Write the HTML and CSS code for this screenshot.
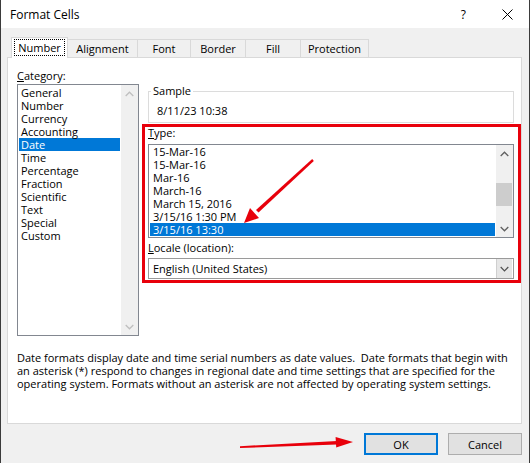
FILE: index.html
```html
<!DOCTYPE html>
<html lang="en">
<head>
<meta charset="utf-8">
<title>Format Cells</title>
<link rel="stylesheet" href="styles.css">
</head>
<body>
<div class="window">
  <div class="titlebar">
    <span class="title">Format Cells</span>
    <span class="help">?</span>
    <span class="close"><svg width="11" height="11" viewBox="0 0 11 11"><path d="M0.5 0.5 L10.5 10.5 M10.5 0.5 L0.5 10.5" stroke="#000" stroke-width="1" fill="none"/></svg></span>
  </div>

  <div class="tabs">
    <div class="tab tab-number active"><span class="focus">Number</span></div>
    <div class="tab tab-alignment">Alignment</div>
    <div class="tab tab-font">Font</div>
    <div class="tab tab-border">Border</div>
    <div class="tab tab-fill">Fill</div>
    <div class="tab tab-protection">Protection</div>
  </div>

  <div class="panel">
    <div class="content">
      <div class="cat-col">
        <div class="label"><u>C</u>ategory:</div>
        <div class="listbox cat-list">
          <div class="items">
            <div class="item">General</div>
            <div class="item">Number</div>
            <div class="item">Currency</div>
            <div class="item">Accounting</div>
            <div class="item selected">Date</div>
            <div class="item">Time</div>
            <div class="item">Percentage</div>
            <div class="item">Fraction</div>
            <div class="item">Scientific</div>
            <div class="item">Text</div>
            <div class="item">Special</div>
            <div class="item">Custom</div>
          </div>
          <div class="vscroll disabled">
            <div class="sb-btn"><svg width="9" height="6" viewBox="0 0 9 6"><polyline points="0.7,5 4.5,1.2 8.3,5" fill="none" stroke-width="1.3"/></svg></div>
            <div class="sb-track"></div>
            <div class="sb-btn"><svg width="9" height="6" viewBox="0 0 9 6"><polyline points="0.7,1 4.5,4.8 8.3,1" fill="none" stroke-width="1.3"/></svg></div>
          </div>
        </div>
      </div>

      <div class="right-col">
        <div class="group">
          <span class="group-label">Sample</span>
          <div class="sample-value">8/11/23 10:38</div>
        </div>

        <div class="label type-label"><u>T</u>ype:</div>
        <div class="listbox type-list">
          <div class="items">
            <div class="item">15-Mar-16</div>
            <div class="item">15-Mar-16</div>
            <div class="item">Mar-16</div>
            <div class="item">March-16</div>
            <div class="item">March 15, 2016</div>
            <div class="item">3/15/16 1:30 PM</div>
            <div class="item selected">3/15/16 13:30</div>
          </div>
          <div class="vscroll">
            <div class="sb-btn"><svg width="9" height="6" viewBox="0 0 9 6"><polyline points="0.7,5 4.5,1.2 8.3,5" fill="none" stroke-width="1.3"/></svg></div>
            <div class="sb-track"><div class="sb-thumb"></div></div>
            <div class="sb-btn"><svg width="9" height="6" viewBox="0 0 9 6"><polyline points="0.7,1 4.5,4.8 8.3,1" fill="none" stroke-width="1.3"/></svg></div>
          </div>
        </div>

        <div class="label locale-label"><u>L</u>ocale (location):</div>
        <div class="combo">
          <span class="combo-text">English (United States)</span>
          <span class="combo-btn"><svg width="9" height="6" viewBox="0 0 9 6"><polyline points="0.7,1 4.5,4.8 8.3,1" fill="none" stroke="#505050" stroke-width="1.2"/></svg></span>
        </div>
      </div>
    </div>

    <p class="desc">Date formats display date and time serial numbers as date values.&nbsp; Date formats that begin with<br>an asterisk (*) respond to changes in regional date and time settings that are specified for the<br>operating system. Formats without an asterisk are not affected by operating system settings.</p>
  </div>

  <div class="buttons">
    <button class="btn btn-default">OK</button>
    <button class="btn">Cancel</button>
  </div>

  <svg class="annotations" width="530" height="463" viewBox="0 0 530 463">
    <rect x="143.5" y="125.5" width="376" height="156" fill="none" stroke="#e8000b" stroke-width="3"/>
    <polygon points="313.8,160.9 312.2,159.1 256,210 258.5,212.6" fill="#e8000b"/>
    <polygon points="244,223 250,208 259,218" fill="#e8000b"/>
    <polygon points="240,446.2 240,448 337,444.6 337,441" fill="#e8000b"/>
    <polygon points="353,442 335.6,437 336.2,447.4" fill="#e8000b"/>
  </svg>
</div>
</body>
</html>
```

FILE: styles.css
```css
* {
  box-sizing: border-box;
}

html,
body {
  margin: 0;
  padding: 0;
}

body {
  width: 530px;
  height: 463px;
  overflow: hidden;
  font-family: "Open Sans", "Noto Sans", sans-serif;
  font-size: 11px;
  color: #000;
}

.window {
  position: relative;
  width: 530px;
  height: 463px;
  background: #f0f0f0;
  border-left: 1px solid #3b3b3b;
  border-right: 1px solid #3b3b3b;
  display: flex;
  flex-direction: column;
}

/* Title bar */
.titlebar {
  height: 28px;
  flex: none;
  background: #fff;
  display: flex;
  align-items: center;
  padding: 1px 0 0 9px;
}

.title {
  flex: 1;
  font-size: 12px;
}

.help {
  font-size: 12px;
  margin-right: 36px;
}

.close {
  display: flex;
  margin-right: 16px;
}

/* Tabs */
.tabs {
  flex: none;
  height: 29px;
  display: flex;
  align-items: flex-end;
  padding-left: 10px;
  position: relative;
  z-index: 1;
}

.tab {
  height: 18px;
  border: 1px solid #d9d9d9;
  border-bottom: none;
  margin-left: -1px;
  background: #f0f0f0;
  display: flex;
  align-items: center;
  justify-content: center;
  font-size: 11px;
  padding-bottom: 1px;
}

.tab:first-child {
  margin-left: 0;
}

.tab.active {
  height: 21px;
  margin-bottom: -1px;
  background: #fff;
  padding-bottom: 1px;
}

.focus {
  outline: 1px dotted #000;
  outline-offset: 0;
  padding: 0 3px;
  line-height: 15px;
}

.tab-number { width: 57px; }
.tab-alignment { width: 71px; }
.tab-font { width: 54px; }
.tab-border { width: 56px; }
.tab-fill { width: 56px; }
.tab-protection { width: 69px; }

/* Panel */
.panel {
  flex: none;
  margin-left: 6px;
  width: 515px;
  height: 367px;
  background: #fff;
  border: 1px solid #d9d9d9;
  padding: 10px 0 0 9px;
}

.content {
  display: flex;
  gap: 9px;
}

.label {
  height: 16px;
  line-height: 15px;
}

.cat-col {
  width: 122px;
}

.right-col {
  width: 366px;
}

/* Listboxes */
.listbox {
  display: flex;
  border: 1px solid #828790;
  background: #fff;
}

.cat-list {
  height: 252px;
}

.type-list {
  height: 94px;
  margin-top: 4px;
}

.items {
  flex: 1;
  padding: 1px 1px 0;
}

.type-list .items {
  padding-top: 0;
}

.item {
  height: 13px;
  line-height: 13px;
  padding-left: 2px;
  white-space: nowrap;
}

.type-list .item {
  padding-left: 3px;
}

.item.selected {
  background: #0078d7;
  color: #fff;
}

.vscroll {
  width: 17px;
  flex: none;
  display: flex;
  flex-direction: column;
  background: #f0f0f0;
}

.sb-btn {
  height: 17px;
  flex: none;
  display: flex;
  align-items: center;
  justify-content: center;
}

.sb-btn svg {
  stroke: #606060;
}

.vscroll.disabled .sb-btn svg {
  stroke: #bfbfbf;
}

.sb-track {
  flex: 1;
  position: relative;
}

.sb-thumb {
  margin: 21px 1px 0 0;
  height: 23px;
  background: #cdcdcd;
}

/* Sample group */
.group {
  position: relative;
  margin-top: 23px;
  height: 32px;
  border: 1px solid #dcdcdc;
  padding: 12px 0 0 8px;
}

.group-label {
  position: absolute;
  top: -8px;
  left: 2px;
  padding: 0 2px;
  background: #fff;
  line-height: 14px;
}

.sample-value {
  line-height: 14px;
}

.type-label {
  margin-top: 3px;
  height: 14px;
  line-height: 14px;
}

.locale-label {
  margin-top: 3px;
  height: 14px;
  line-height: 14px;
}

/* Combo box */
.combo {
  margin-top: 3px;
  height: 21px;
  border: 1px solid #9a9a9a;
  display: flex;
  align-items: center;
  padding: 0 1px 0 4px;
}

.combo-text {
  flex: 1;
}

.combo-btn {
  width: 16px;
  height: 19px;
  display: flex;
  align-items: center;
  justify-content: center;
  background: #e6e6e6;
  border-left: 1px solid #cfcfcf;
}

/* Description */
.desc {
  margin: 15px 0 0;
  line-height: 13px;
  white-space: nowrap;
}

/* Buttons */
.buttons {
  flex: none;
  display: flex;
  justify-content: flex-end;
  gap: 10px;
  margin-top: 9px;
  padding-right: 7px;
}

.btn {
  width: 74px;
  height: 22px;
  border: 1px solid #adadad;
  background: #e1e1e1;
  font-family: inherit;
  font-size: 11px;
  color: #000;
  padding: 0;
  margin: 0;
}

.btn-default {
  border: 2px solid #0078d7;
}

/* Annotations */
.annotations {
  position: absolute;
  top: 0;
  left: -1px;
  pointer-events: none;
}
```
